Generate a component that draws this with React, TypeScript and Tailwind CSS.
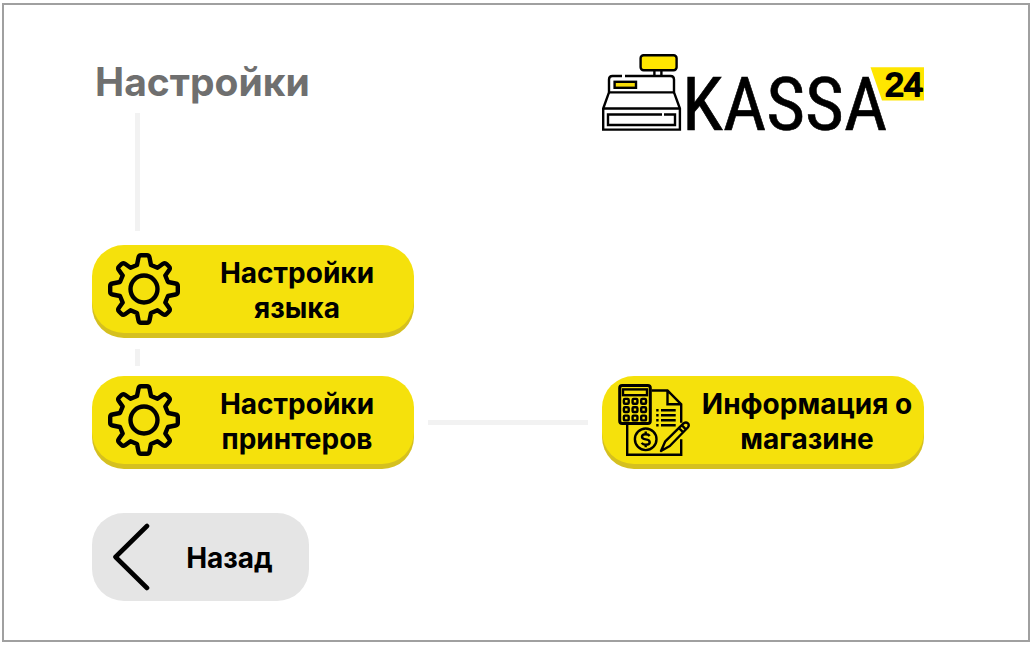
import type { ReactNode } from "react";

function GearIcon() {
  return (
    <svg viewBox="0 0 72 72" className="size-[72px] shrink-0" fill="none" stroke="#000" strokeWidth="4.4" strokeLinejoin="round" aria-hidden="true">
      <path d="M29 12 L30.5 4.5 Q31 2.2 33 2.2 H39 Q41 2.2 41.5 4.5 L43 12 L49.5 14.7 L55 10.8 Q57 9.5 58.5 11 L61 13.5 Q62.5 15 61.2 17 L57.3 22.5 L60 29 L67.5 30.5 Q69.8 31 69.8 33 V39 Q69.8 41 67.5 41.5 L60 43 L57.3 49.5 L61.2 55 Q62.5 57 61 58.5 L58.5 61 Q57 62.5 55 61.2 L49.5 57.3 L43 60 L41.5 67.5 Q41 69.8 39 69.8 H33 Q31 69.8 30.5 67.5 L29 60 L22.5 57.3 L17 61.2 Q15 62.5 13.5 61 L11 58.5 Q9.5 57 10.8 55 L14.7 49.5 L12 43 L4.5 41.5 Q2.2 41 2.2 39 V33 Q2.2 31 4.5 30.5 L12 29 L14.7 22.5 L10.8 17 Q9.5 15 11 13.5 L13.5 11 Q15 9.5 17 10.8 L22.5 14.7 Z" />
      <circle cx="36" cy="36" r="13.5" />
    </svg>
  );
}

function AccountingIcon() {
  const columns = [8.3, 17, 25.6];
  const rows = [17.3, 25.6, 34];
  const lines = [26.3, 31.3, 36.3, 41.3];
  return (
    <svg viewBox="0 0 72 72" className="size-[72px] shrink-0" fill="none" stroke="#000" strokeWidth="2.4" aria-hidden="true">
      <rect x="1.7" y="1.6" width="30.6" height="38" rx="2.5" strokeWidth="3" />
      <rect x="5" y="5.4" width="24" height="5.8" />
      {rows.map((y) =>
        columns.map((x) => <rect key={`${x}-${y}`} x={x - 2.4} y={y - 2.4} width="4.8" height="4.8" rx="1" />),
      )}
      <path d="M33.5 6.5 H49.5 L63.2 20.3 V38.7 M49.5 6.5 V20.3 H63.2" />
      <path d="M9.2 41 V70.8 H63.2 V55.3" />
      {lines.map((y) => (
        <path key={y} d={`M38.2 ${y} H40.6 M43 ${y} H57.7`} />
      ))}
      <circle cx="27.7" cy="55.3" r="10.8" />
      <path d="M31.7 52 Q30.5 50.2 27.7 50.2 Q24 50.2 24 52.8 Q24 55 27.7 55.4 Q31.7 55.9 31.7 58.2 Q31.7 60.8 27.7 60.8 Q25 60.8 23.6 58.9 M27.7 47.5 V50.2 M27.7 60.8 V63.3" />
      <path strokeLinejoin="round" d="M43 67 L47.3 57.3 L65.8 39.2 Q68 37.6 69.9 39.3 Q71.6 41.3 69.8 43.5 L51.8 62 Z M60.9 44 L65 48.2 M63.8 41.2 L67.8 45.4" />
    </svg>
  );
}

function Logo() {
  return (
    <svg viewBox="0 0 322 80" className="w-full overflow-visible" role="img" aria-label="KASSA 24">
      <g fill="none" stroke="#000" strokeWidth="2.4">
        <rect x="38.6" y="1.2" width="36" height="15" rx="3" fill="#ffe600" />
        <path d="M52.4 17 V22 M59.4 17 V22" />
        <path d="M20 22 H10.5 Q7 22 7 25.5 V38.4 L1.2 54.5 V75.6 H77.9 V54.5 L72 38.4 V25.5 Q72 22 68.5 22 H23" />
        <path d="M7 38.4 H72 M1.2 54.5 H77.9" />
        <rect x="12.6" y="27.8" width="21.4" height="6" fill="#f7dc08" />
        <path d="M60 60.5 H6 V71 H73 V60.5 H62" />
      </g>
      <text x="80" y="76" fontSize="75" fontWeight="400" fill="#000" stroke="#000" strokeWidth="0.6" fontFamily="'Roboto Condensed', Roboto, sans-serif">KASSA</text>
      <path d="M268.5 13.3 H322 V46.6 H280 Z" fill="#ffe600" />
      <text x="283" y="42" fontSize="34" fill="#000" stroke="#000" strokeWidth="2.2" strokeLinejoin="round" fontFamily="'Liberation Sans', sans-serif">24</text>
    </svg>
  );
}

function MenuButton({ icon, children }: { icon: ReactNode; children: ReactNode }) {
  return (
    <button type="button" className="mb-[5px] flex min-h-22 w-full cursor-pointer items-center rounded-[32px] bg-[#f5e10c] pl-4 text-[28px] leading-[35px] font-bold text-black shadow-[0_5px_0_#d5c01f]">
      {icon}
      <span className="flex-1 pt-[3px] text-center">{children}</span>
    </button>
  );
}

export default function App() {
  return (
    <div className="flex min-h-screen bg-white px-0.5 py-[3px] font-['Inter',sans-serif]">
      <main className="flex-1 border-2 border-[#a0a0a0] pt-[49px] pr-[104px] pb-9 pl-22">
        <div className="grid grid-cols-[322fr_188fr_322fr]">
          <header className="flex flex-col">
            <h1 className="mt-1 pl-[3px] text-[39px] leading-[48px] font-bold text-[#6f6f6f]">Настройки</h1>
            <div className="mt-[7px] mb-[14px] ml-[43px] h-[118px] w-[5px] bg-[#f2f2f2]" />
          </header>
          <div className="col-start-3">
            <Logo />
          </div>

          <div className="col-start-1">
            <MenuButton icon={<GearIcon />}>
              Настройки
              <br />
              языка
            </MenuButton>
            <div className="mt-4 mb-[10px] ml-[43px] h-[17px] w-[5px] bg-[#f2f2f2]" />
          </div>

          <div className="col-start-1">
            <MenuButton icon={<GearIcon />}>
              Настройки
              <br />
              принтеров
            </MenuButton>
          </div>
          <div className="mx-[14px] h-[5px] self-center bg-[#f2f2f2]" />
          <div>
            <MenuButton icon={<AccountingIcon />}>
              Информация о<br />
              магазине
            </MenuButton>
          </div>
        </div>

        <button type="button" className="mt-11 flex min-h-22 w-[217px] cursor-pointer items-center rounded-[32px] bg-[#e5e5e5] pl-5 text-[28px] leading-[35px] font-bold text-black">
          <svg viewBox="0 0 38 68" className="h-[68px] w-[38px] shrink-0" fill="none" stroke="#000" strokeWidth="4.6" strokeLinecap="round" strokeLinejoin="round" aria-hidden="true">
            <path d="M35 3 L3.5 34 L35 65" />
          </svg>
          <span className="flex-1 pt-[3px] text-center">Назад</span>
        </button>
      </main>
    </div>
  );
}
